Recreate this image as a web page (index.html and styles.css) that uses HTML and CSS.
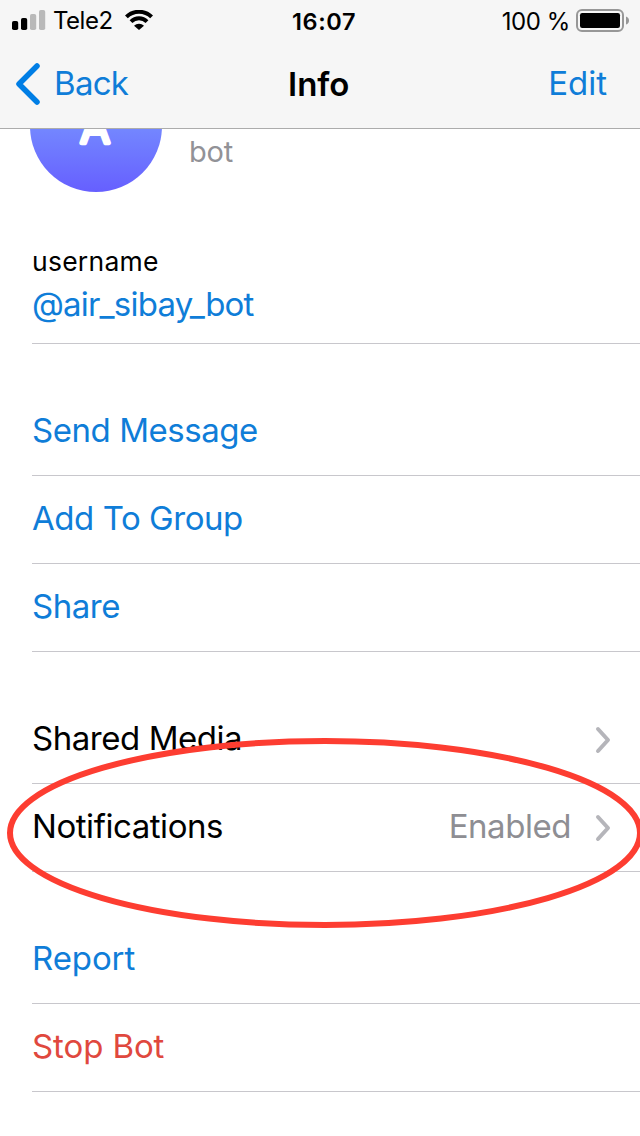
FILE: index.html
```html
<!DOCTYPE html>
<html lang="en">
<head>
<meta charset="utf-8">
<title>Info</title>
<link rel="stylesheet" href="styles.css">
</head>
<body>
<div class="screen">
  <header class="topbar">
    <div class="status">
      <div class="status-left">
        <svg class="signal" width="34" height="20" viewBox="0 0 34 20">
          <rect x="0" y="11" width="6.2" height="9" rx="1.8"/>
          <rect x="9" y="8" width="6.2" height="12" rx="1.8"/>
          <rect class="off" x="18" y="4" width="6.2" height="16" rx="1.8"/>
          <rect class="off" x="27" y="0" width="6.2" height="20" rx="1.8"/>
        </svg>
        <span class="carrier">Tele2</span>
        <svg class="wifi" width="28" height="20" viewBox="0 0 28 20">
          <path class="arc" d="M1.4 6.9A18 18 0 0 1 26.6 6.9"/>
          <path class="arc" d="M6 11.6A11.4 11.4 0 0 1 22 11.6"/>
          <path d="M9 15.8A7.1 7.1 0 0 1 19 15.8L14 20Z"/>
        </svg>
      </div>
      <span class="time">16:07</span>
      <div class="status-right">
        <span class="percent">100 %</span>
        <svg class="battery" width="54" height="24" viewBox="0 0 54 24">
          <rect class="shell" x="1" y="1" width="46" height="21" rx="5"/>
          <rect x="4" y="4" width="40" height="15" rx="2.2"/>
          <path class="cap" d="M50 7.5Q53 8.5 53 11.5T50 15.5Z"/>
        </svg>
      </div>
    </div>
    <nav class="nav">
      <a class="back">
        <svg width="26" height="44" viewBox="0 0 26 44"><path d="M23 4L5 22L23 40"/></svg>
        <span class="back-label">Back</span>
      </a>
      <span class="title">Info</span>
      <a class="edit">Edit</a>
    </nav>
  </header>
  <main class="content">
    <section class="profile">
      <svg class="avatar" width="132" height="132" viewBox="0 0 132 132"><text x="65" y="82.5">A</text></svg>
      <span class="kind">bot</span>
    </section>
    <section class="username">
      <span class="label">username</span>
      <span class="handle">@air_sibay_bot</span>
    </section>
    <section class="group">
      <div class="row link"><span>Send Message</span></div>
      <div class="row link"><span>Add To Group</span></div>
      <div class="row link"><span>Share</span></div>
    </section>
    <section class="group">
      <div class="row"><span>Shared Media</span>
        <svg class="chevron" width="16" height="28" viewBox="0 0 16 28"><path d="M3 3L13 14L3 25"/></svg></div>
      <div class="row"><span>Notifications</span><span class="value">Enabled</span>
        <svg class="chevron" width="16" height="28" viewBox="0 0 16 28"><path d="M3 3L13 14L3 25"/></svg></div>
    </section>
    <section class="group">
      <div class="row link wide"><span>Report</span></div>
      <div class="row danger wide"><span>Stop Bot</span></div>
    </section>
  </main>
  <svg class="highlight" width="640" height="200" viewBox="0 0 640 200"><ellipse cx="325" cy="100" rx="315" ry="92"/></svg>
</div>
</body>
</html>
```
FILE: styles.css
```css
* { box-sizing: border-box; }
body { margin: 0; background: #fff; }
.screen {
  position: relative;
  width: 640px;
  height: 1136px;
  overflow: hidden;
  display: flex;
  flex-direction: column;
  background: #fff;
  color: #000;
  font-family: Inter, "Liberation Sans", sans-serif;
  font-size: 33px;
  font-weight: 400;
  white-space: nowrap;
}
svg { display: block; flex: none; }
.topbar { height: 129px; background: #f6f6f6; border-bottom: 1px solid #acacac; flex: none; }
.status, .nav { display: grid; grid-template-columns: 1fr auto 1fr; align-items: center; }
.status { height: 40px; padding: 0 11px 0 12px; font-size: 24px; grid-template-columns: 280px auto 1fr; }
.status-left, .status-right { display: flex; align-items: center; }
.status-right { justify-content: flex-end; margin-right: -1px; }
.signal .off { fill: #b9b9b9; }
.carrier { margin-left: 7px; width: 72px; letter-spacing: -0.5px; padding-top: 1px; }
.wifi .arc { fill: none; stroke: #000; stroke-width: 4; }
.time { font-weight: 600; font-size: 23.5px; letter-spacing: 0.6px; padding-top: 2px; }
.percent { margin-right: 6px; letter-spacing: -0.4px; padding-top: 2px; }
.battery { margin-top: 1px; }
.battery .shell { fill: none; stroke: #979797; stroke-width: 2; }
.battery .cap { fill: #979797; }
.nav { height: 88px; padding: 0 33px 2px 14px; color: #0f7dd8; grid-template-columns: 274px auto 1fr; }
.back { display: flex; align-items: center; gap: 14px; }
.back svg { margin-top: 1px; }
.back-label { letter-spacing: -0.7px; }
.back path { fill: none; stroke: #007ee5; stroke-width: 5.5; stroke-linecap: round; stroke-linejoin: round; }
.title { color: #000; font-weight: 600; padding-top: 1px; }
.edit { text-align: right; }
.content { flex: 1; overflow: hidden; }
.profile { display: flex; height: 63px; padding-left: 30px; }
.avatar {
  margin-top: -69px;
  border-radius: 50%;
  background: linear-gradient(#82b1ff, #665fff);
}
.avatar text {
  fill: #fff;
  stroke: #fff;
  stroke-width: 4.5px;
  stroke-linejoin: round;
  font-size: 44px;
  font-weight: 300;
  text-anchor: middle;
}
.kind { margin-left: 27px; padding-top: 5px; font-size: 29px; line-height: 36px; letter-spacing: -0.2px; color: #929297; }
.username {
  display: flex;
  flex-direction: column;
  height: 152px;
  margin-left: 32px;
  padding-top: 53px;
  border-bottom: 1px solid #c8c7cc;
}
.label { font-size: 26.5px; line-height: 32px; letter-spacing: 0.25px; }
.handle { line-height: 40px; margin-top: 7px; letter-spacing: -0.8px; color: #0f7dd8; }
.group { margin: 44px 0 0 32px; }
.row {
  display: flex;
  align-items: center;
  height: 88px;
  padding: 0 29px 3px 0;
  letter-spacing: -0.45px;
  border-bottom: 1px solid #c8c7cc;
}
.wide { letter-spacing: -0.1px; }
.link { color: #0f7dd8; }
.danger { color: #e0483e; }
.value { margin-left: auto; color: #8e8e93; }
.chevron { margin-left: auto; margin-top: 4px; }
.value + .chevron { margin-left: 24px; }
.chevron path { fill: none; stroke: #b5b5ba; stroke-width: 4; stroke-linecap: round; stroke-linejoin: round; }
.highlight { position: absolute; left: 0; top: 733px; }
.highlight ellipse { fill: none; stroke: #fd3d31; stroke-width: 6; }
```
